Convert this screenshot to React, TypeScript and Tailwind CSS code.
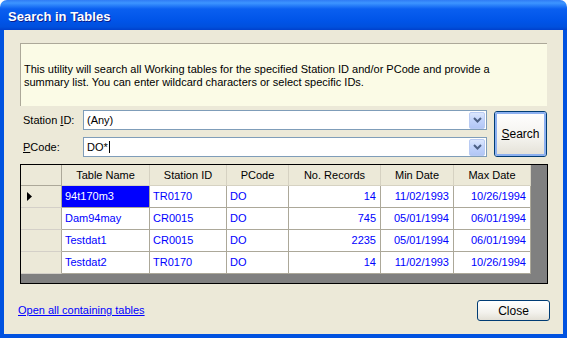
import React from "react"

const font = { fontFamily: '"Liberation Sans", Arial, sans-serif' }

type Row = { name: string; station: string; pcode: string; records: number; min: string; max: string }

const rows: Row[] = [
  { name: "94t170m3", station: "TR0170", pcode: "DO", records: 14, min: "11/02/1993", max: "10/26/1994" },
  { name: "Dam94may", station: "CR0015", pcode: "DO", records: 745, min: "05/01/1994", max: "06/01/1994" },
  { name: "Testdat1", station: "CR0015", pcode: "DO", records: 2235, min: "05/01/1994", max: "06/01/1994" },
  { name: "Testdat2", station: "TR0170", pcode: "DO", records: 14, min: "11/02/1993", max: "10/26/1994" },
]

function ComboBox({ value, caret }: { value: string; caret?: boolean }) {
  return (
    <div className="flex h-[20px] flex-1 items-center border border-[#7F9DB9] bg-white pl-[3px]">
      <span className="flex-1 text-[11px] text-black">
        {value}
        {caret && <span className="ml-[1px] inline-block h-[12px] w-[1px] translate-y-[2px] bg-black" />}
      </span>
      <div className="mr-[1px] flex h-[17px] w-[16px] items-center justify-center rounded-[2px] border border-[#B9CBF3] bg-[linear-gradient(to_bottom,#DCE7FD,#C1D3FB_50%,#B2C6F5)]">
        <svg width="9" height="6" viewBox="0 0 9 6">
          <path d="M1 1 L4.5 4.5 L8 1" stroke="#4D6185" strokeWidth="2" fill="none" />
        </svg>
      </div>
    </div>
  )
}

function XpButton({ children, focused, className }: { children: React.ReactNode; focused?: boolean; className: string }) {
  return (
    <button
      className={
        "flex items-center justify-center rounded-[3px] border border-[#003C74] bg-[linear-gradient(to_bottom,#FFFFFF,#F3F2ED_60%,#E3E0D6)] text-[12px] text-black " +
        className
      }
    >
      <span
        className={
          "flex h-full w-full items-center justify-center rounded-[2px] " +
          (focused ? "border-2 border-[#8CB0F0]" : "")
        }
      >
        {children}
      </span>
    </button>
  )
}

const cols = [
  { label: "Table Name", w: "w-[88px]" },
  { label: "Station ID", w: "w-[77px]" },
  { label: "PCode", w: "w-[62px]" },
  { label: "No. Records", w: "w-[92px]" },
  { label: "Min Date", w: "w-[73px]" },
  { label: "Max Date", w: "w-[77px]" },
]

export default function App() {
  return (
    <div className="h-[338px] w-[567px] bg-white" style={font}>
      <div className="flex h-[30px] items-center rounded-t-[7px] bg-[linear-gradient(to_bottom,#2F7BF5_0%,#3D95FF_10%,#0A5FF0_30%,#0054E8_70%,#0050DD_90%,#0040CC_100%)] pl-[8px] pt-[3px]">
        <span className="text-[13px] font-bold text-white [text-shadow:1px_1px_0_#0A1E8C]">Search in Tables</span>
      </div>
      <div className="flex h-[308px] flex-col border-x-4 border-b-4 border-[#0052E0] bg-[#ECE9D8] px-[16px] pt-[13px]">
        <div className="flex h-[63px] flex-col justify-center border-l border-t border-[#ACA899] border-b-white border-r-white bg-[#FBFBE6] pl-[3px] pt-[1px] text-[11px] leading-[13px] text-black">
          <p>This utility will search all Working tables for the specified Station ID and/or PCode and provide a</p>
          <p>summary list. You can enter wildcard characters or select specific IDs.</p>
        </div>

        <div className="mt-[4px] flex gap-[7px]">
          <div className="flex flex-1 flex-col gap-[7px]">
            <div className="flex items-center">
              <span className="w-[63px] pl-[3px] text-[11px]">
                Station <span className="underline">I</span>D:
              </span>
              <ComboBox value="(Any)" />
            </div>
            <div className="flex items-center">
              <span className="w-[63px] pl-[3px] text-[11px]">
                <span className="underline">P</span>Code:
              </span>
              <ComboBox value="DO*" caret />
            </div>
          </div>
          <XpButton focused className="mt-[1px] h-[46px] w-[53px]">
            <span>
              <span className="underline">S</span>earch
            </span>
          </XpButton>
        </div>

        <div className="mt-[7px] flex h-[120px] w-[528px] flex-col border border-black bg-[#808080]">
          <div className="flex h-[21px]">
            <div className="w-[41px] border-b border-r border-[#ACA899] bg-[#ECE9D8]" />
            {cols.map((c) => (
              <div
                key={c.label}
                className={`${c.w} flex items-center justify-center border-b border-r border-[#D6D2C2] bg-[#ECE9D8] text-[11px] text-black`}
              >
                {c.label}
              </div>
            ))}
          </div>
          {rows.map((r, i) => (
            <div key={r.name} className="flex h-[22px] text-[11px] text-[#0000FF]">
              <div className="flex w-[41px] items-center border-b border-r border-b-[#D4D0C8] border-r-[#ACA899] bg-[#ECE9D8] pl-[6px]">
                {i === 0 && (
                  <svg width="5" height="9" viewBox="0 0 5 9">
                    <path d="M0 0 L5 4.5 L0 9 Z" fill="black" />
                  </svg>
                )}
              </div>
              <div
                className={`flex w-[88px] items-center border-b border-r border-[#ACA899] pl-[3px] ${
                  i === 0 ? "bg-[#0000FF] text-white" : "bg-white"
                }`}
              >
                {r.name}
              </div>
              <div className="flex w-[77px] items-center border-b border-r border-[#ACA899] bg-white pl-[3px]">{r.station}</div>
              <div className="flex w-[62px] items-center border-b border-r border-[#ACA899] bg-white pl-[3px]">{r.pcode}</div>
              <div className="flex w-[92px] items-center justify-end border-b border-r border-[#ACA899] bg-white pr-[4px]">{r.records}</div>
              <div className="flex w-[73px] items-center justify-end border-b border-r border-[#ACA899] bg-white pr-[4px]">{r.min}</div>
              <div className="flex w-[77px] items-center justify-end border-b border-r border-[#ACA899] bg-white pr-[4px]">{r.max}</div>
            </div>
          ))}
        </div>

        <div className="mt-[16px] flex items-center justify-between">
          <a className="ml-[-2px] text-[11px] text-[#0000FF] underline">Open all containing tables</a>
          <XpButton className="mr-[-3px] h-[21px] w-[73px]">Close</XpButton>
        </div>
      </div>
    </div>
  )
}
